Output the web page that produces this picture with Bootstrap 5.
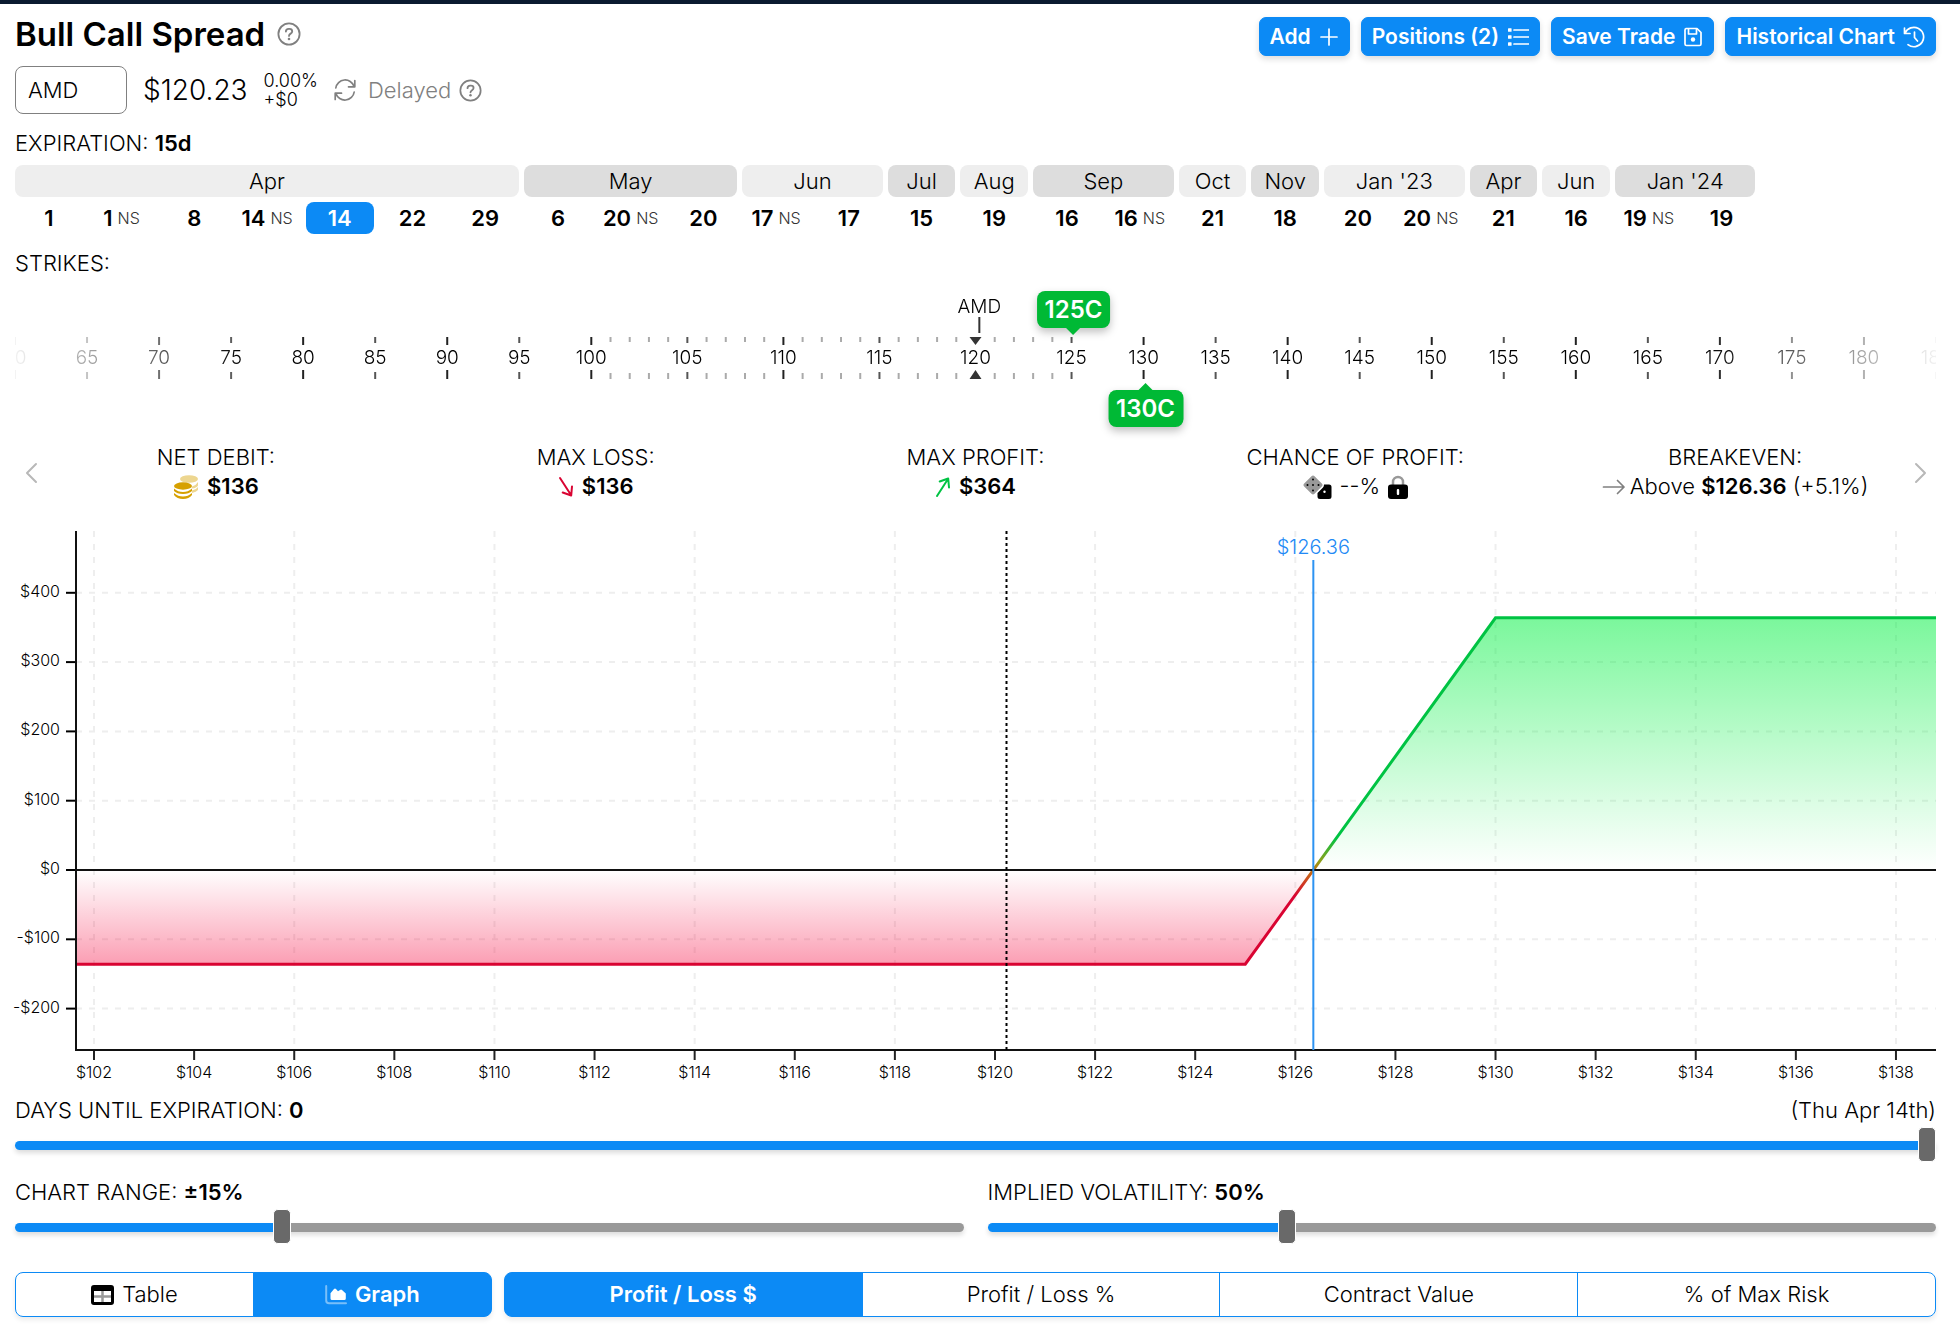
<!DOCTYPE html>
<html lang="en">
<head>
<meta charset="utf-8">
<meta name="viewport" content="width=device-width, initial-scale=1">
<title>Bull Call Spread</title>
<link href="https://cdn.jsdelivr.net/npm/bootstrap@5.3.0/dist/css/bootstrap.min.css" rel="stylesheet">
<style>
:root { --accent: #0c8af5; --muted: #808080; }
body { font-family: Inter, "Liberation Sans", sans-serif; font-size: 22px; font-weight: 300; line-height: 28px; color: #000; background: #fff; }
b, .value { font-weight: 600; }
svg { display: block; flex-shrink: 0; }
.topbar { height: 4px; background: #0a1a30; }
.page { padding: 8px 24px 16px 15px; }
.page-title { font-size: 33px; font-weight: 600; line-height: 44px; margin: 0; }
.muted { color: var(--muted); }
.header-actions { gap: 11px; padding-top: 5px; }
.btn-accent { --bs-btn-color: #fff; --bs-btn-bg: var(--accent); --bs-btn-border-color: var(--accent); --bs-btn-hover-color: #fff; --bs-btn-hover-bg: #0a78d8; --bs-btn-padding-x: 10px; --bs-btn-padding-y: 5px; --bs-btn-border-radius: 7px; --bs-btn-font-size: 21px; --bs-btn-font-weight: 600; display: flex; align-items: center; gap: 8px; line-height: 27px; box-shadow: 0 3px 6px rgba(0,0,0,.14); }
.quote-row { margin-top: 10px; }
.section-label { margin-top: 15px; }
.symbol-box { width: 112px; height: 48px; font-size: 22px; font-weight: 300; color: #000; padding: 0 12px; border: 1px solid #808080; border-radius: 8px; }
.price { font-size: 28px; }
.change { font-size: 18px; line-height: 19px; }
.expirations { display: grid; grid-template-columns: repeat(24, minmax(0, 1fr)); gap: 5px; width: 90.6%; text-align: center; }
.expirations + .expirations { margin-top: 5px; }
.month { line-height: 32px; border-radius: 8px; background: #eee; }
.month:nth-child(even) { background: #ddd; }
.day { border: 0; background: none; padding: 0; line-height: 32px; border-radius: 8px; font-weight: 600; color: #000; white-space: nowrap; }
.day.active { background: var(--accent); color: #fff; }
.day sup { font-size: 16px; font-weight: 300; color: #333; top: -2px; vertical-align: baseline; margin-left: 5px; }
.ruler { position: relative; height: 162px; }
.ruler svg { width: 100%; height: 162px; }
.ruler-scale { -webkit-mask-image: linear-gradient(90deg, rgba(0,0,0,.05), #000 12%, #000 88%, rgba(0,0,0,.05)); mask-image: linear-gradient(90deg, rgba(0,0,0,.05), #000 12%, #000 88%, rgba(0,0,0,.05)); }
.ruler text { font-size: 19px; text-anchor: middle; }
.strike { position: absolute; margin-left: 2px; transform: translateX(-50%); border: 0; background: #00b935; color: #fff; font-size: 24px; font-weight: 600; line-height: 37px; padding: 0 8px; border-radius: 8px; box-shadow: 0 4px 9px rgba(0,0,0,.25); }
.strike::after { content: ""; position: absolute; left: 50%; margin-left: -7px; border: 7px solid transparent; }
.strike-long { top: 14px; left: 55%; }
.strike-long::after { top: 100%; border-bottom-width: 0; border-top-color: #00b935; }
.strike-short { top: 113px; left: 58.75%; }
.strike-short::after { bottom: 100%; border-top-width: 0; border-bottom-color: #00b935; }
.summary { padding: 0 11px; margin-top: 4px; line-height: 29px; text-align: center; }
.nudge { position: absolute; top: 18px; padding: 0; border: 0; background: none; }
.payoff { width: 100%; height: 557px; margin-top: 30px; overflow: visible; }
.payoff text { font-size: 16px; }
.payoff .marker { font-size: 20px; fill: #2289f5; }
.slider { -webkit-appearance: none; appearance: none; display: block; width: 100%; height: 33px; margin: 5px 0 0; background: none; }
.slider::-webkit-slider-runnable-track { height: 9px; border-radius: 5px; background: linear-gradient(90deg, var(--accent) var(--fill), #999 var(--fill)); box-shadow: 0 3px 5px rgba(0,0,0,.14); }
.slider::-webkit-slider-thumb { -webkit-appearance: none; width: 18px; height: 35px; margin-top: -14px; border-radius: 5px; background: #696969; border: 1px solid #fff; }
.seg .btn { --bs-btn-color: #000; --bs-btn-border-color: var(--accent); --bs-btn-active-color: #fff; --bs-btn-active-bg: var(--accent); --bs-btn-active-border-color: var(--accent); --bs-btn-hover-color: #000; --bs-btn-hover-border-color: var(--accent); --bs-btn-border-radius: 8px; --bs-btn-font-size: 22px; --bs-btn-font-weight: 300; line-height: 33px; padding: 5px 8px; flex: 1 1 0; width: 0; }
.seg .btn-check:checked + .btn { font-weight: 600; }
.seg { border-radius: 8px; box-shadow: 0 3px 5px rgba(0,0,0,.08); }
.seg-view { flex: 477 1 0; }
.seg-metric { flex: 1433 1 0; }
</style>
<script src="https://cdn.jsdelivr.net/npm/bootstrap@5.3.0/dist/js/bootstrap.bundle.min.js"></script>
</head>
<body>
<svg width="0" height="0" class="position-absolute" aria-hidden="true">
  <symbol id="i-help" viewBox="0 0 24 24"><circle cx="12" cy="12" r="10.6" fill="none" stroke="currentColor" stroke-width="1.8"/><path d="M8.9 9.6c0-1.7 1.1-2.7 2.8-2.7h.8c1.5 0 2.7 1 2.7 2.5 0 2.3-3.2 2.2-3.2 4.5" fill="none" stroke="currentColor" stroke-width="1.9" stroke-linecap="round"/><circle cx="12" cy="17" r="1.3" fill="currentColor"/></symbol>
</svg>
<div class="topbar"></div>
<main class="page">
  <header class="d-flex justify-content-between align-items-start">
    <div class="d-flex align-items-center gap-2">
      <h1 class="page-title">Bull Call Spread</h1>
      <svg class="muted ms-1" width="24" height="24"><use href="#i-help"/></svg>
    </div>
    <div class="d-flex header-actions">
      <button class="btn btn-accent" type="button">Add
        <svg width="20" height="20" viewBox="0 0 20 20" fill="none" stroke="#fff" stroke-width="1.7" stroke-linecap="round"><path d="M10 2v16M2 10h16"/></svg></button>
      <button class="btn btn-accent" type="button">Positions (2)
        <svg width="22" height="20" viewBox="0 0 22 20"><path d="M7 3h14.500M7 10h14.500M7 17h14.500" fill="none" stroke="#fff" stroke-width="1.7" stroke-linecap="round"/><g fill="#fff"><rect x="1" y="1.200" width="3.600" height="3.600" rx=".6"/><rect x="1" y="8.200" width="3.600" height="3.600" rx=".6"/><rect x="1" y="15.200" width="3.600" height="3.600" rx=".6"/></g></svg></button>
      <button class="btn btn-accent" type="button">Save Trade
        <svg width="20" height="20" viewBox="0 0 20 20" fill="none" stroke="#fff" stroke-width="1.700" stroke-linejoin="round"><path d="M3 1.500h11l4 4V17q0 1.500-1.500 1.500h-13Q2 18.500 2 17V3q0-1.500 1.500-1.500z"/><path d="M5.500 1.500V7h8V1.500"/><circle cx="10" cy="12.500" r="2.200" fill="#fff" stroke="none"/></svg></button>
      <button class="btn btn-accent" type="button">Historical Chart
        <svg width="22" height="22" viewBox="0 0 22 22" fill="none" stroke="#fff" stroke-width="1.700" stroke-linecap="round" stroke-linejoin="round"><path d="M1.500 2v5.500h5.500M2 7.200A9.700 9.700 0 1 1 5 18.700"/><path d="M11.500 6v5.500l3 3.500"/></svg></button>
    </div>
  </header>

  <div class="d-flex align-items-center quote-row">
    <input class="symbol-box" type="text" value="AMD" aria-label="Symbol">
    <span class="price ms-3">$120.23</span>
    <span class="change ms-3">0.00%<br>+$0</span>
    <span class="d-flex align-items-center gap-2 muted ms-3">
      <svg width="22" height="22" viewBox="0 0 22 22" fill="none" stroke="currentColor" stroke-width="1.700" stroke-linecap="round" stroke-linejoin="round"><path d="M1.800 9A9.400 9.400 0 0 1 20 7.300M20.800 1.500v6.300h-6.300M20.200 13A9.400 9.400 0 0 1 2 14.700M1.200 20.500v-6.300h6.300"/></svg>
      <span class="ms-1">Delayed</span>
      <svg width="23" height="23"><use href="#i-help"/></svg>
    </span>
  </div>

  <div class="section-label">EXPIRATION: <b>15d</b></div>
  <div class="expirations mt-2" id="months"></div>
  <div class="expirations" id="days"></div>

  <div class="section-label">STRIKES:</div>
  <div class="ruler">
    <svg class="ruler-scale" id="scale"></svg>
    <button class="strike strike-long" type="button">125C</button>
    <button class="strike strike-short" type="button">130C</button>
  </div>

  <section class="summary position-relative">
    <button class="nudge start-0 ms-2" type="button" aria-label="Previous"><svg width="16" height="24" viewBox="0 0 16 24" fill="none" stroke="#b8b8b8" stroke-width="2" stroke-linecap="round" stroke-linejoin="round"><path d="M13 3 4 12l9 9"/></svg></button>
    <div class="row row-cols-5 g-0">
      <div class="col">NET DEBIT:
        <div class="d-flex justify-content-center align-items-center gap-2">
          <svg width="26" height="24" viewBox="0 0 26 24"><g fill="#edd690"><ellipse cx="16" cy="4" rx="9" ry="3.800"/><path d="M25 7v3.500q-1.500 2.500-6 3v-2Q23 10.500 25 7zM25 12v3q-1.500 2-6 3v-2.500Q23 15 25 12z"/></g><g fill="#d6a000"><ellipse cx="10" cy="11" rx="9" ry="3.700"/><path d="M1 13.500q4 3.500 9 3.500t9-3.500V16q-3 3-9 3t-9-3zM1 18q4 3.500 9 3.500T19 18v2q-3 4-9 4t-9-4z"/></g></svg>
          <span class="value">$136</span></div></div>
      <div class="col">MAX LOSS:
        <div class="d-flex justify-content-center align-items-center gap-2">
          <svg width="16" height="22" viewBox="0 0 16 22" fill="none" stroke="#d90432" stroke-width="2" stroke-linecap="round" stroke-linejoin="round"><path d="M2 2l11 17M14 10.500l-.800 9-8.500-3"/></svg>
          <span class="value">$136</span></div></div>
      <div class="col">MAX PROFIT:
        <div class="d-flex justify-content-center align-items-center gap-2">
          <svg width="16" height="22" viewBox="0 0 16 22" fill="none" stroke="#00c343" stroke-width="2" stroke-linecap="round" stroke-linejoin="round"><path d="M2 20 13 3M14 11.500l-.800-9-8.500 3"/></svg>
          <span class="value">$364</span></div></div>
      <div class="col">CHANCE OF PROFIT:
        <div class="d-flex justify-content-center align-items-center gap-2">
          <svg width="29" height="24" viewBox="0 0 29 24"><path d="M8.500 1.200q1.500-1.500 3 0l7.300 7.300q1.500 1.500 0 3l-7.300 7.300q-1.500 1.500-3 0L1.200 11.500q-1.500-1.500 0-3z" fill="#999"/><g fill="#000"><circle cx="10" cy="4.500" r="1"/><circle cx="4.500" cy="10" r="1"/><circle cx="10" cy="10" r="1"/><circle cx="15.500" cy="10" r="1"/><circle cx="10" cy="15.500" r="1"/><path d="M21 9.500h5q2.500 0 2.500 2.500v9.500q0 2.500-2.500 2.500h-9q-2.500 0-2.500-2.500V18l5.500-5.500q1-1.200 1-3z"/></g><circle cx="21.500" cy="16.800" r="1.200" fill="#fff"/></svg>
          <span>--%</span>
          <svg width="20" height="24" viewBox="0 0 20 24"><path d="M5 10V7a5 5 0 0 1 10 0v3" fill="none" stroke="#999" stroke-width="2.500"/><rect y="9.500" width="20" height="14.500" rx="3" fill="#000"/><rect x="8.800" y="14" width="2.400" height="6" rx="1" fill="#fff"/></svg></div></div>
      <div class="col">BREAKEVEN:
        <div class="d-flex justify-content-center align-items-center gap-1">
          <svg width="24" height="16" viewBox="0 0 24 16" fill="none" stroke="#808080" stroke-width="1.700" stroke-linecap="round" stroke-linejoin="round"><path d="M1.500 8h20.500M15.500 1.500 22 8l-6.500 6.500"/></svg>
          <span>Above <span class="value">$126.36</span> (+5.1%)</span></div></div>
    </div>
    <button class="nudge end-0 me-2" type="button" aria-label="Next"><svg width="16" height="24" viewBox="0 0 16 24" fill="none" stroke="#b8b8b8" stroke-width="2" stroke-linecap="round" stroke-linejoin="round"><path d="M4 3l9 9-9 9"/></svg></button>
  </section>

  <svg class="payoff" id="payoff" role="img" aria-label="Profit and loss at expiration"></svg>

  <div class="d-flex justify-content-between mt-2"><label for="days-left">DAYS UNTIL EXPIRATION: <b>0</b></label><span>(Thu Apr 14th)</span></div>
  <input class="slider" id="days-left" type="range" min="0" max="15" value="15">
  <div class="row mt-3 gx-4">
    <div class="col-6"><label for="chart-range">CHART RANGE: <b>±15%</b></label><input class="slider" id="chart-range" type="range" min="0" max="54" value="15"></div>
    <div class="col-6"><label for="volatility">IMPLIED VOLATILITY: <b>50%</b></label><input class="slider" id="volatility" type="range" min="1" max="158" value="50"></div>
  </div>

  <div class="d-flex gap-2 mt-4 pt-1">
    <div class="btn-group seg seg-view me-1" role="group" aria-label="View">
      <input class="btn-check" type="radio" name="view" id="v-table"><label class="btn d-flex justify-content-center align-items-center gap-2" for="v-table"><svg width="23" height="20" viewBox="0 0 23 20"><path d="M3 0h17q3 0 3 3v14q0 3-3 3H3q-3 0-3-3V3q0-3 3-3zM3 6v11h17V6z" fill-rule="evenodd"/><path d="M11.500 6v11M3 11.500h17" stroke="#999" stroke-width="2.500"/></svg>Table</label>
      <input class="btn-check" type="radio" name="view" id="v-graph" checked><label class="btn d-flex justify-content-center align-items-center gap-2" for="v-graph"><svg width="22" height="20" viewBox="0 0 22 20"><path d="M1.200 1v14.500q0 2.800 2.800 2.800h17" fill="none" stroke="#fff" stroke-opacity=".45" stroke-width="2" stroke-linecap="round"/><path d="M5.500 13.500V8.200L9 4q1-1 2 0l2 2.200L15 5q1-1 2 0l3.800 3.500v5q0 1.500-1.500 1.500H7q-1.500 0-1.500-1.500z" fill="#fff"/></svg>Graph</label>
    </div>
    <div class="btn-group seg seg-metric" role="group" aria-label="Metric">
      <input class="btn-check" type="radio" name="metric" id="m-pl" checked><label class="btn" for="m-pl">Profit / Loss $</label>
      <input class="btn-check" type="radio" name="metric" id="m-pct"><label class="btn" for="m-pct">Profit / Loss %</label>
      <input class="btn-check" type="radio" name="metric" id="m-val"><label class="btn" for="m-val">Contract Value</label>
      <input class="btn-check" type="radio" name="metric" id="m-risk"><label class="btn" for="m-risk">% of Max Risk</label>
    </div>
  </div>
</main>
<script>
const months = [["Apr", "1 1n 8 14n 14* 22 29"], ["May", "6 20n 20"], ["Jun", "17n 17"], ["Jul", "15"], ["Aug", "19"], ["Sep", "16 16n"], ["Oct", "21"], ["Nov", "18"], ["Jan '23", "20 20n"], ["Apr", "21"], ["Jun", "16"], ["Jan '24", "19n 19"]];
document.getElementById("months").innerHTML = months.map(([m, d]) => `<div class="month" style="grid-column: span ${d.split(" ").length}">${m}</div>`).join("");
document.getElementById("days").innerHTML = months.flatMap(([, d]) => d.split(" ")).map(d => `<button type="button" class="day${d.endsWith("*") ? " active" : ""}">${parseInt(d)}${d.endsWith("n") ? "<sup>NS</sup>" : ""}</button>`).join("");

/* Strike ruler: one-dollar strikes between 100 and 125, five-dollar strikes outside */
const pct = s => s <= 100 ? (s - 60) * .75 : s <= 125 ? 30 + (s - 100) : 55 + (s - 125) * .75;
let ruler = "";
const tick = (s, top, bottom, color) => {
  const x = pct(s) + "%";
  ruler += `<line x1="${x}" x2="${x}" y1="60" y2="${top}" stroke="${color}" stroke-width="2"/><line x1="${x}" x2="${x}" y1="${bottom}" y2="102" stroke="${color}" stroke-width="2"/>`;
};
for (let s = 60; s <= 185; s += (s >= 100 && s < 125) ? 1 : 5) {
  if (s % 5) { tick(s, 65, 96, "#aaa"); continue; }
  if (s !== 120) tick(s, s % 10 ? 66 : 68, s % 10 ? 95 : 93, s % 10 ? "#555" : "#222");
  ruler += `<text x="${pct(s)}%" y="87">${s}</text>`;
}
ruler += `<text x="50.200%" y="36">AMD</text><line x1="50.200%" x2="50.200%" y1="40" y2="56" stroke="#333" stroke-width="2"/>
  <svg x="50%" style="overflow:visible"><path d="M-6 60h12l-6 8zM-6 102h12l-6-9z" fill="#333"/></svg>`;
document.getElementById("scale").innerHTML = ruler;

/* Payoff chart */
function drawPayoff() {
  const svg = document.getElementById("payoff"), w = svg.clientWidth;
  const left = 61, bottom = 519, zero = 339;
  const x = p => left + (p - 101.64) * (w - left) / 37.160;
  const y = v => zero - v * .693;
  const be = x(126.36);
  let s = `<defs>
    <linearGradient id="up" x1="0" x2="0" y1="0" y2="1"><stop stop-color="#00f040" stop-opacity=".52"/><stop offset="1" stop-color="#00f040" stop-opacity="0"/></linearGradient>
    <linearGradient id="down" x1="0" x2="0" y1="0" y2="1"><stop stop-color="#f50038" stop-opacity="0"/><stop offset="1" stop-color="#f50038" stop-opacity=".38"/></linearGradient>
    <linearGradient id="line" gradientUnits="userSpaceOnUse" x1="0" x2="0" y1="${zero + 26}" y2="${zero - 32}"><stop stop-color="#d90432"/><stop offset=".45" stop-color="#c57412"/><stop offset=".6" stop-color="#8f9f18"/><stop offset="1" stop-color="#00c343"/></linearGradient></defs>`;
  for (let p = 102; p <= 138; p += 4) s += `<line x1="${x(p)}" x2="${x(p)}" y1="0" y2="${bottom}" stroke="#eee" stroke-width="2" stroke-dasharray="6 7"/>`;
  for (let v = -200; v <= 400; v += 100) {
    s += `<line x1="${left}" x2="${w}" y1="${y(v)}" y2="${y(v)}" stroke="#eee" stroke-width="2" stroke-dasharray="6 7"/>
      <line x1="${left - 10}" x2="${left}" y1="${y(v)}" y2="${y(v)}" stroke="#000" stroke-width="2"/>
      <text x="${left - 16}" y="${y(v) + 4}" text-anchor="end">${v < 0 ? "-" : ""}$${Math.abs(v)}</text>`;
  }
  for (let p = 102; p <= 138; p += 2) s += `<line x1="${x(p)}" x2="${x(p)}" y1="${bottom}" y2="${bottom + 10}" stroke="#222" stroke-width="2"/><text x="${x(p)}" y="547" text-anchor="middle">$${p}</text>`;
  s += `<polygon points="${be},${zero} ${x(130)},${y(364)} ${w},${y(364)} ${w},${zero}" fill="url(#up)"/>
    <polygon points="${left},${zero} ${left},${y(-136)} ${x(125)},${y(-136)} ${be},${zero}" fill="url(#down)"/>
    <polyline points="${left},${y(-136)} ${x(125)},${y(-136)} ${x(130)},${y(364)} ${w},${y(364)}" fill="none" stroke="url(#line)" stroke-width="3"/>
    <path d="M${left} 0V${bottom}H${w}M${left} ${zero}H${w}" fill="none" stroke="#111" stroke-width="2"/>
    <line x1="${x(120.23)}" x2="${x(120.23)}" y1="0" y2="${bottom}" stroke="#000" stroke-width="2" stroke-dasharray="3 3"/>
    <line x1="${be}" x2="${be}" y1="29" y2="${bottom}" stroke="#2c93f2" stroke-width="2"/>
    <text class="marker" x="${be}" y="23" text-anchor="middle">$126.36</text>`;
  svg.innerHTML = s;
}
drawPayoff();
addEventListener("resize", drawPayoff);

document.querySelectorAll(".slider").forEach(el => {
  const paint = () => el.style.setProperty("--fill", (el.value - el.min) / (el.max - el.min) * 100 + "%");
  paint();
  el.addEventListener("input", paint);
});
</script>
</body>
</html>
